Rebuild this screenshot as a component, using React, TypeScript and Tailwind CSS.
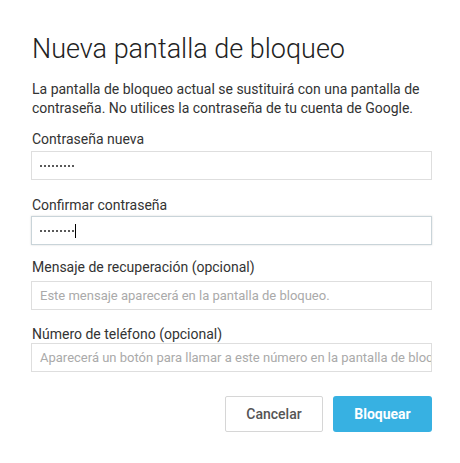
import React from "react";

const Dots = () => (
  <div className="flex items-center gap-[2px]">
    {Array.from({ length: 9 }).map((_, i) => (
      <span key={i} className="h-[2px] w-[2px] rounded-full bg-[#222]" />
    ))}
  </div>
);

const App = () => {
  return (
    <div className="h-[463px] w-[460px] bg-white font-['Roboto',sans-serif] text-[#333]">
      <div className="pl-[31px] pr-[28px] pt-[33px]">
        {/* Title */}
        <h1 className="pl-[1px] text-[27px] font-light leading-[32px] text-[#222]">
          Nueva pantalla de bloqueo
        </h1>

        {/* Description */}
        <p className="mt-[15px] pl-[1px] text-[14px] leading-[19px] text-[#333]">
          La pantalla de bloqueo actual se sustituirá con una pantalla de
          contraseña. No utilices la contraseña de tu cuenta de Google.
        </p>

        {/* Contraseña nueva */}
        <label className="mt-[12px] block pl-[1px] text-[14px] leading-[18px]">Contraseña nueva</label>
        <div className="mt-[3px] flex h-[29px] items-center border border-[#dedede] px-[8px]">
          <Dots />
        </div>

        {/* Confirmar */}
        <label className="mt-[16px] block pl-[1px] text-[14px] leading-[18px]">Confirmar contraseña</label>
        <div className="mt-[2px] flex h-[29px] items-center border border-[#c9d4d9] px-[8px] shadow-[0_0_2px_rgba(0,0,0,0.15)]">
          <Dots />
          <span className="ml-[1px] h-[14px] w-[1px] bg-black" />
        </div>

        {/* Mensaje */}
        <label className="mt-[13px] block pl-[1px] text-[14px] leading-[18px]">
          Mensaje de recuperación (opcional)
        </label>
        <div className="mt-[5px] flex h-[29px] items-center border border-[#dedede] px-[8px] text-[13px] text-[#aaa]">
          Este mensaje aparecerá en la pantalla de bloqueo.
        </div>

        {/* Teléfono */}
        <label className="mt-[15px] block pl-[1px] text-[14px] leading-[18px]">
          Número de teléfono (opcional)
        </label>
        <div className="flex h-[29px] items-center overflow-hidden whitespace-nowrap border border-[#dedede] px-[8px] text-[13px] text-[#aaa]">
          Aparecerá un botón para llamar a este número en la pantalla de bloqueo.
        </div>

        {/* Buttons */}
        <div className="mt-[24px] flex justify-end gap-[10px]">
          <button className="h-[36px] w-[98px] rounded-[2px] border border-[#d6d6d6] bg-white text-[14px] font-medium text-[#555]">
            Cancelar
          </button>
          <button className="h-[36px] w-[99px] rounded-[3px] bg-[#37b1e2] text-[14px] font-bold text-white">
            Bloquear
          </button>
        </div>
      </div>
    </div>
  );
};

export default App;
